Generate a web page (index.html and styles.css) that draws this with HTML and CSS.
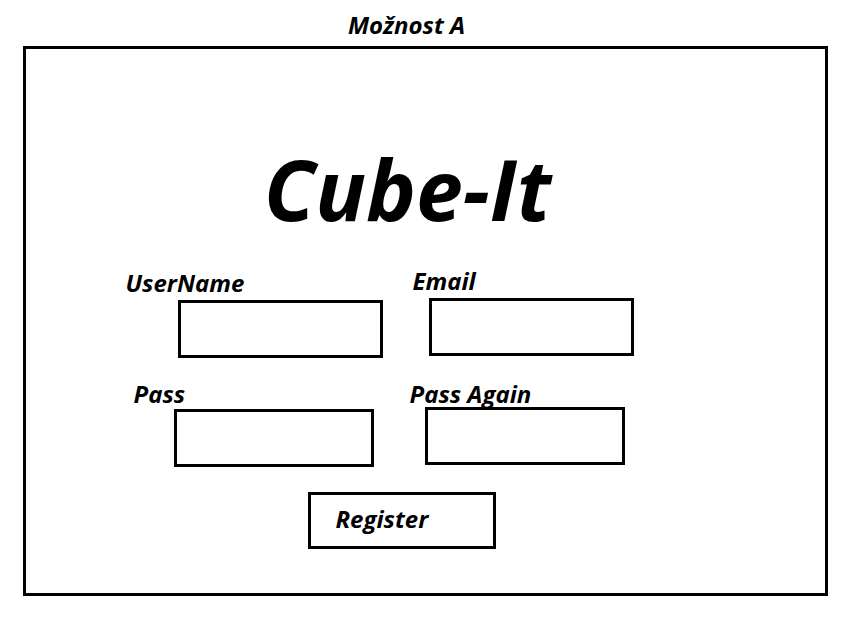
FILE: index.html
```html
<!DOCTYPE html>
<html lang="cs">
<head>
<meta charset="utf-8">
<title>Cube-It</title>
<link rel="stylesheet" href="styles.css">
</head>
<body>
<h2 class="caption">Možnost A</h2>
<main class="panel">
  <h1 class="title">Cube-It</h1>
  <form class="form">
    <div class="row row-identity">
      <div class="field field-username">
        <label for="username">UserName</label>
        <input id="username" type="text">
      </div>
      <div class="field field-email">
        <label for="email">Email</label>
        <input id="email" type="email">
      </div>
    </div>
    <div class="row row-password">
      <div class="field field-pass">
        <label for="pass">Pass</label>
        <input id="pass" type="password">
      </div>
      <div class="field field-again">
        <label for="again">Pass Again</label>
        <input id="again" type="password">
      </div>
    </div>
    <button class="register" type="button">Register</button>
  </form>
</main>
</body>
</html>
```

FILE: styles.css
```css
* {
  box-sizing: border-box;
}

body {
  margin: 0;
  padding: 10px 27px 22px 23px;
  background: #fff;
  color: #000;
  font: italic bold 24px/30px "Open Sans", sans-serif;
}

.caption {
  margin: 0;
  padding-bottom: 6px;
  padding-right: 38px;
  font-size: inherit;
  text-align: center;
}

.panel {
  border: 3px solid #000;
  padding: 86px 0 44px;
}

.title {
  margin: 0;
  padding-right: 36px;
  font-size: 84px;
  line-height: 108px;
  text-align: center;
}

.form {
  width: 600px;
  max-width: 100%;
  margin: 25px auto 0;
}

.row {
  display: flex;
  align-items: flex-start;
  line-height: 26px;
}

.field {
  display: flex;
  flex-direction: column;
}

input {
  height: 58px;
  border: 3px solid #000;
  padding: 0 12px;
  background: #fff;
  font: inherit;
}

.row-identity {
  gap: 30px;
}

.row-identity input {
  width: 205px;
  margin-top: 4px;
}

.row-password {
  margin-top: 23px;
  gap: 36px;
}

.row-password input {
  width: 200px;
}

.field-username {
  padding-top: 2px;
}

.field-username input {
  margin-left: 52px;
}

.field-email input {
  margin-left: 16px;
}

.field-pass {
  padding-left: 8px;
}

.field-pass input {
  margin-top: 2px;
  margin-left: 40px;
}

.field-again input {
  margin-left: 15px;
}

.register {
  display: block;
  width: 188px;
  height: 57px;
  margin: 25px 0 0 182px;
  border: 3px solid #000;
  padding: 0 0 4px 25px;
  background: #fff;
  color: inherit;
  font: inherit;
  text-align: left;
}
```
